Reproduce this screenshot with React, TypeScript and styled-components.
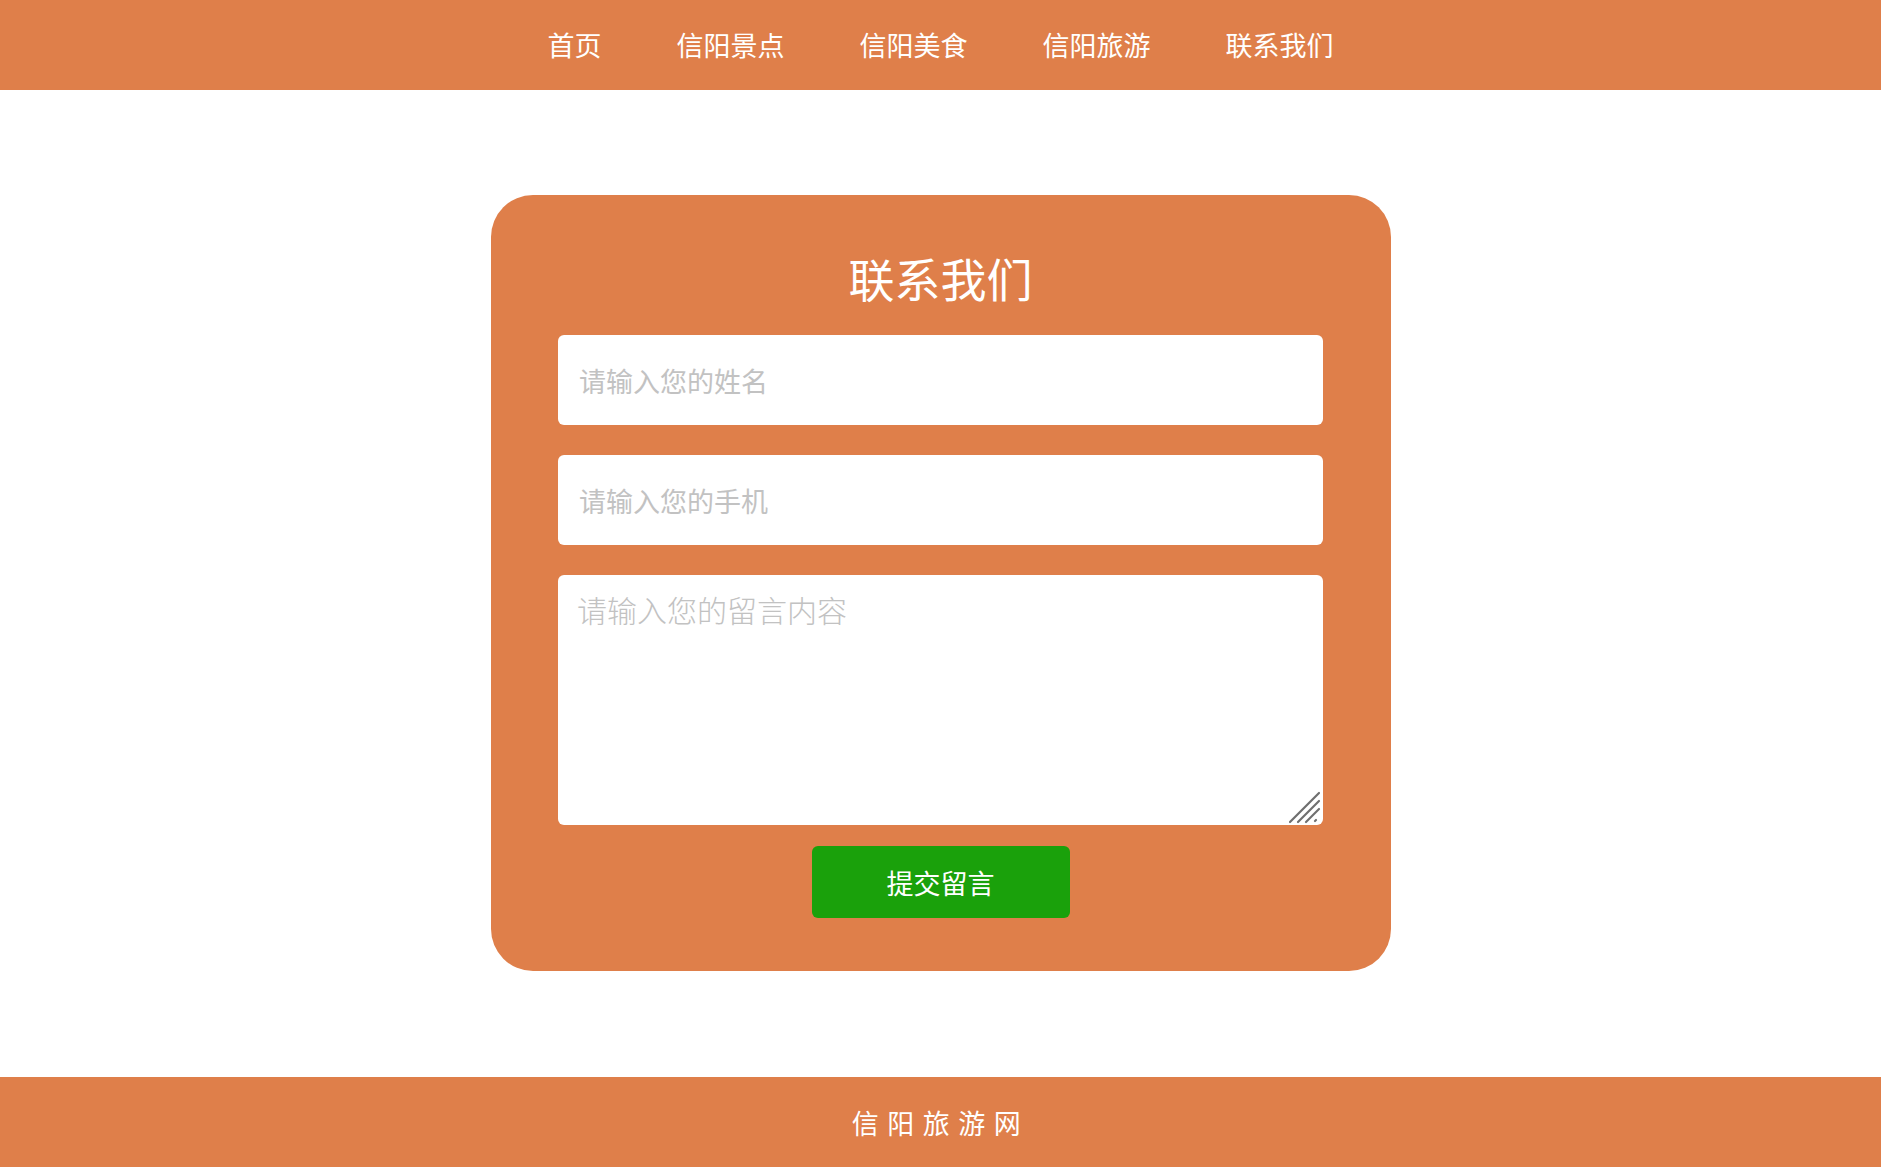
import styled, { createGlobalStyle } from 'styled-components';

const GlobalStyle = createGlobalStyle`
  * {
    box-sizing: border-box;
  }
  body {
    margin: 0;
    background: #ffffff;
    font-family: "Noto Sans CJK SC", "Noto Sans", sans-serif;
  }
`;

const Page = styled.div`
  display: flex;
  flex-direction: column;
  min-height: 1167px;
`;

const Navbar = styled.nav`
  height: 90px;
  background-color: #df7f4a;
  display: flex;
  justify-content: center;
  align-items: center;
  gap: 75px;
`;

const NavItem = styled.a`
  color: #ffffff;
  font-size: 27px;
  line-height: 90px;
  text-decoration: none;
  cursor: pointer;
`;

const Main = styled.main`
  flex: 1;
  padding: 105px 0 106px;
`;

const Card = styled.form`
  width: 900px;
  margin: 0 auto;
  padding: 49px 0 53px;
  background-color: #df7f4a;
  border-radius: 42px;
  display: flex;
  flex-direction: column;
  align-items: center;
`;

const Title = styled.h2`
  margin: 0 0 25px;
  color: #ffffff;
  font-size: 46px;
  font-weight: 400;
  line-height: 66px;
`;

const Field = styled.input`
  width: 765px;
  height: 90px;
  margin-bottom: 30px;
  padding: 0 20px 0 21px;
  border: none;
  border-radius: 6px;
  outline: none;
  background: #ffffff;
  font-family: "Noto Sans CJK SC", sans-serif;
  font-size: 27px;
  color: #333;

  &::placeholder {
    color: #c2c2c2;
  }
`;

const MessageWrap = styled.div`
  position: relative;
  width: 765px;
  height: 250px;
  margin-bottom: 21px;
`;

const Message = styled.textarea`
  display: block;
  width: 100%;
  height: 100%;
  padding: 12px 19px;
  border: none;
  border-radius: 6px;
  outline: none;
  resize: none;
  background: #ffffff;
  font-family: "Noto Sans CJK SC", sans-serif;
  font-size: 30px;
  font-weight: 300;
  color: #333;

  &::placeholder {
    color: #c2c2c2;
  }
`;

const Grip = styled.svg`
  position: absolute;
  right: 2px;
  bottom: 1px;
  width: 33px;
  height: 33px;
  pointer-events: none;
`;

const SubmitButton = styled.button`
  width: 258px;
  height: 72px;
  border: none;
  border-radius: 6px;
  background-color: #1aa10b;
  color: #ffffff;
  font-family: "Noto Sans CJK SC", sans-serif;
  font-size: 27px;
  cursor: pointer;
`;

const Footer = styled.footer`
  height: 90px;
  background-color: #df7f4a;
  display: flex;
  justify-content: center;
  align-items: center;
  color: #ffffff;
  font-size: 27px;
  letter-spacing: 8.5px;
`;

const navLinks = ['首页', '信阳景点', '信阳美食', '信阳旅游', '联系我们'];

const App: React.FC = () => {
  return (
    <Page>
      <GlobalStyle />
      <Navbar>
        {navLinks.map((link) => (
          <NavItem key={link}>{link}</NavItem>
        ))}
      </Navbar>
      <Main>
        <Card onSubmit={(e) => e.preventDefault()}>
          <Title>联系我们</Title>
          <Field type="text" placeholder="请输入您的姓名" />
          <Field type="text" placeholder="请输入您的手机" />
          <MessageWrap>
            <Message placeholder="请输入您的留言内容" />
            <Grip viewBox="0 0 33 33">
              <g stroke="#6f6f6f" strokeWidth="2.2" strokeLinecap="round">
                <line x1="2" y1="31" x2="31" y2="2" />
                <line x1="10" y1="31" x2="31" y2="10" />
                <line x1="18" y1="31" x2="31" y2="18" />
                <line x1="27" y1="30" x2="28" y2="29" />
              </g>
            </Grip>
          </MessageWrap>
          <SubmitButton type="submit">提交留言</SubmitButton>
        </Card>
      </Main>
      <Footer>信阳旅游网</Footer>
    </Page>
  );
};

export default App;
